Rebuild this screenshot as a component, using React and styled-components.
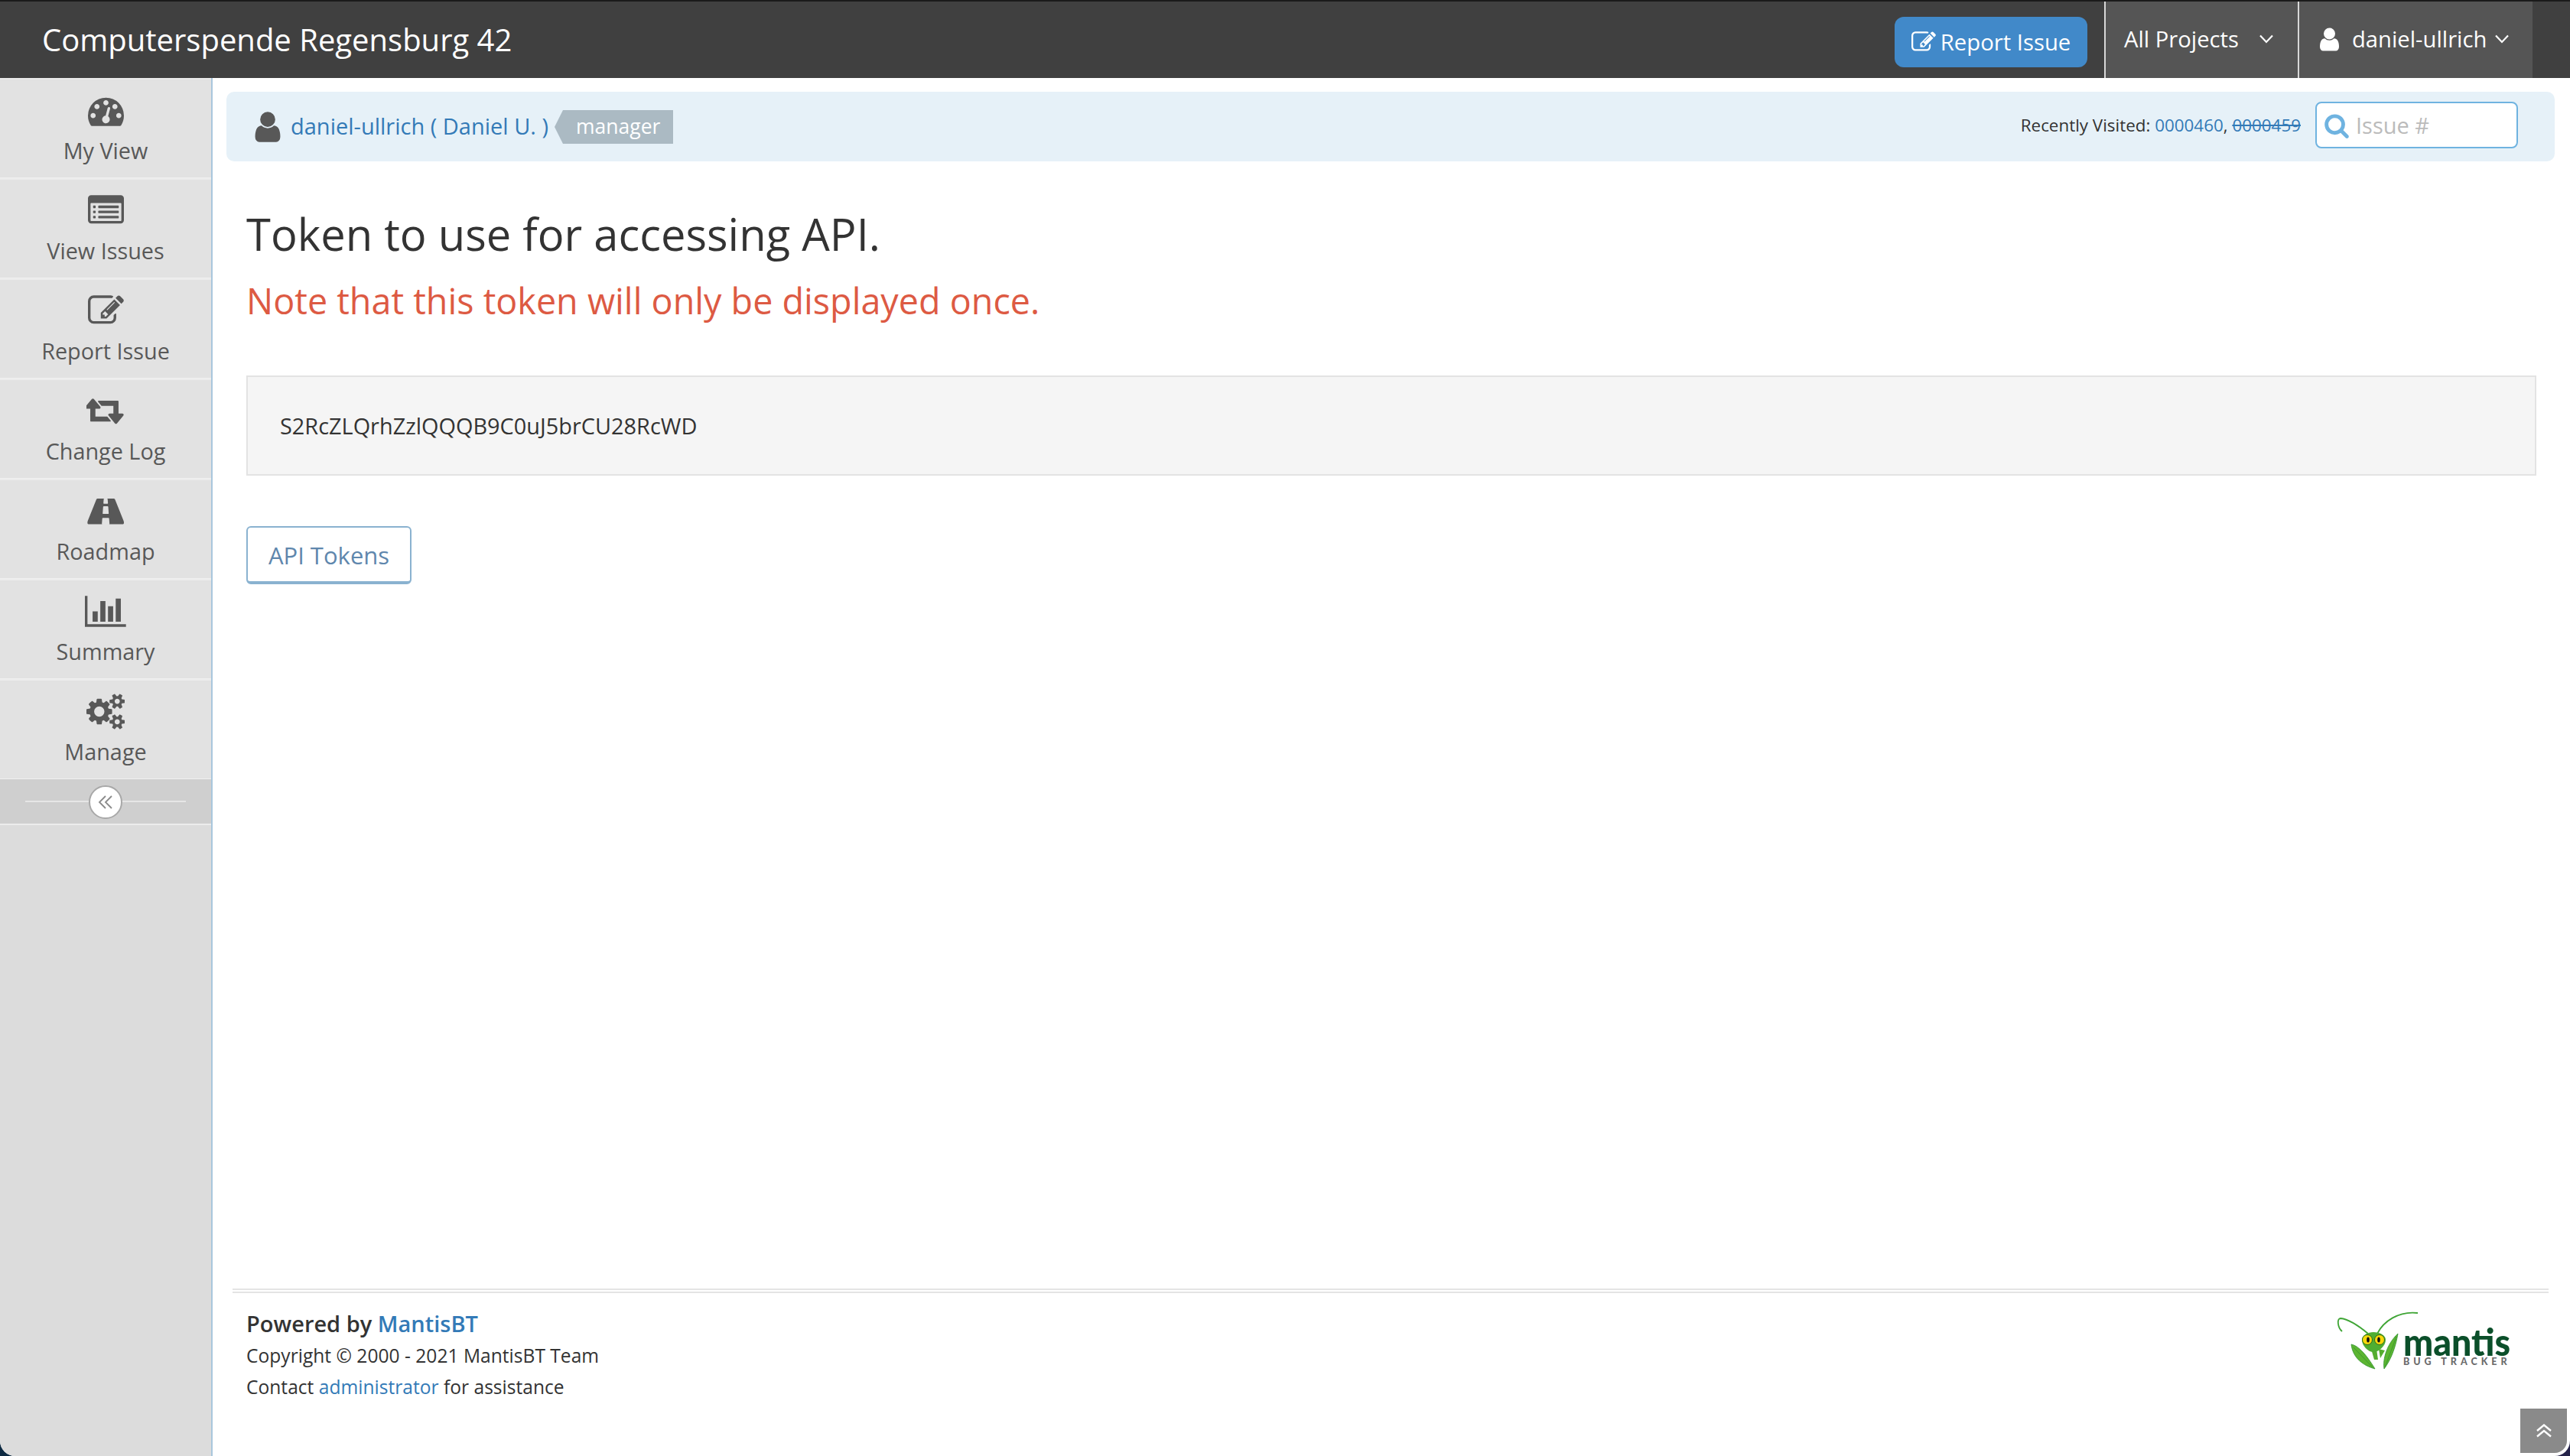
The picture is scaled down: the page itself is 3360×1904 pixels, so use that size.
import styled, { createGlobalStyle } from "styled-components"

const GlobalStyle = createGlobalStyle`
    html, body {
        margin: 0;
        padding: 0;
        background: linear-gradient(to right, #0e2a42, #25234a);
    }
    a {
        color: #337ab7;
        text-decoration: none;
    }
`

const paths = {
    dashboard: [1792, "M384 1152q0-53-37.5-90.5t-90.5-37.5-90.5 37.5-37.5 90.5 37.5 90.5 90.5 37.5 90.5-37.5 37.5-90.5zm192-448q0-53-37.5-90.5t-90.5-37.5-90.5 37.5-37.5 90.5 37.5 90.5 90.5 37.5 90.5-37.5 37.5-90.5zm428 481l101-382q6-26-7.5-48.5t-38.5-29.5-48 6.5-30 39.5l-101 382q-60 5-107 43.5t-63 98.5q-20 77 20 146t117 89 146-20 89-117q16-60-6-117t-72-91zm660-33q0-53-37.5-90.5t-90.5-37.5-90.5 37.5-37.5 90.5 37.5 90.5 90.5 37.5 90.5-37.5 37.5-90.5zm-640-640q0-53-37.5-90.5t-90.5-37.5-90.5 37.5-37.5 90.5 37.5 90.5 90.5 37.5 90.5-37.5 37.5-90.5zm448 192q0-53-37.5-90.5t-90.5-37.5-90.5 37.5-37.5 90.5 37.5 90.5 90.5 37.5 90.5-37.5 37.5-90.5zm320 448q0 261-141 483-19 29-54 29h-1402q-35 0-54-29-141-221-141-483 0-182 71-348t191-286 286-191 348-71 348 71 286 191 191 286 71 348z"],
    list: [1792, "M384 1184v64q0 13-9.5 22.5t-22.5 9.5h-64q-13 0-22.5-9.5t-9.5-22.5v-64q0-13 9.5-22.5t22.5-9.5h64q13 0 22.5 9.5t9.5 22.5zm0-256v64q0 13-9.5 22.5t-22.5 9.5h-64q-13 0-22.5-9.5t-9.5-22.5v-64q0-13 9.5-22.5t22.5-9.5h64q13 0 22.5 9.5t9.5 22.5zm0-256v64q0 13-9.5 22.5t-22.5 9.5h-64q-13 0-22.5-9.5t-9.5-22.5v-64q0-13 9.5-22.5t22.5-9.5h64q13 0 22.5 9.5t9.5 22.5zm1152 512v64q0 13-9.5 22.5t-22.5 9.5h-960q-13 0-22.5-9.5t-9.5-22.5v-64q0-13 9.5-22.5t22.5-9.5h960q13 0 22.5 9.5t9.5 22.5zm0-256v64q0 13-9.5 22.5t-22.5 9.5h-960q-13 0-22.5-9.5t-9.5-22.5v-64q0-13 9.5-22.5t22.5-9.5h960q13 0 22.5 9.5t9.5 22.5zm0-256v64q0 13-9.5 22.5t-22.5 9.5h-960q-13 0-22.5-9.5t-9.5-22.5v-64q0-13 9.5-22.5t22.5-9.5h960q13 0 22.5 9.5t9.5 22.5zm128 704v-832q0-13-9.5-22.5t-22.5-9.5h-1472q-13 0-22.5 9.5t-9.5 22.5v832q0 13 9.5 22.5t22.5 9.5h1472q13 0 22.5-9.5t9.5-22.5zm128-1088v1088q0 66-47 113t-113 47h-1472q-66 0-113-47t-47-113v-1088q0-66 47-113t113-47h1472q66 0 113 47t47 113z"],
    edit: [1792, "M888 1184l116-116-152-152-116 116v56h96v96h56zm440-720q-16-16-33 1l-350 350q-17 17-1 33t33-1l350-350q17-17 1-33zm80 594v190q0 119-84.5 203.5t-203.5 84.5h-832q-119 0-203.5-84.5t-84.5-203.5v-832q0-119 84.5-203.5t203.5-84.5h832q63 0 117 25 15 7 18 23 3 17-9 29l-49 49q-14 14-32 8-23-6-45-6h-832q-66 0-113 47t-47 113v832q0 66 47 113t113 47h832q66 0 113-47t47-113v-126q0-13 9-22l64-64q15-15 35-7t20 29zm-96-738l288 288-672 672h-288v-288zm444 132l-92 92-288-288 92-92q28-28 68-28t68 28l152 152q28 28 28 68t-28 68z"],
    retweet: [1920, "M1216 1392q0 13-9.5 22.5t-22.5 9.5h-960q-8 0-13.5-2t-9-7-5.5-8-3-11.5-1-11.5v-600h-192q-26 0-45-19t-19-45q0-24 15-41l320-384q19-22 49-22t49 22l320 384q15 17 15 41 0 26-19 45t-45 19h-192v384h576q16 0 25 11l160 192q7 10 7 21zm640-304q0 24-15 41l-320 384q-20 23-49 23t-49-23l-320-384q-15-17-15-41 0-26 19-45t45-19h192v-384h-576q-16 0-25-12l-160-192q-7-9-7-20 0-13 9.5-22.5t22.5-9.5h960q8 0 13.5 2t9 7 5.5 8 3 11.5 1 11.5v600h192q26 0 45 19t19 45z"],
    road: [1920, "M1111 1005v-4l-24-320q-1-13-11-22.5t-23-9.5h-186q-13 0-23 9.5t-11 22.5l-24 320v4q-1 12 8 20t21 8h244q12 0 21-8t8-20zm759 467q0 73-46 73h-704q13 0 22-9.5t8-22.5l-20-256q-1-13-11-22.5t-23-9.5h-272q-13 0-23 9.5t-11 22.5l-20 256q-1 13 8 22.5t22 9.5h-704q-46 0-46-73 0-54 26-116l417-1044q8-19 26-33t38-14h339q-13 0-23 9.5t-11 22.5l-15 192q-1 14 8 23t22 9h166q13 0 22-9t8-23l-15-192q-1-13-11-22.5t-23-9.5h339q20 0 38 14t26 33l417 1044q26 62 26 116z"],
    chart: [2048, "M640 896v512h-256v-512h256zm384-512v1024h-256v-1024h256zm1024 1152v128h-2048v-1536h128v1408h1920zm-640-896v768h-256v-768h256zm384-384v1152h-256v-1152h256z"],
    gears: [1920, "M896 896q0-106-75-181t-181-75-181 75-75 181 75 181 181 75 181-75 75-181zm768 512q0-52-38-90t-90-38-90 38-38 90q0 53 37.5 90.5t90.5 37.5 90.5-37.5 37.5-90.5zm0-1024q0-52-38-90t-90-38-90 38-38 90q0 53 37.5 90.5t90.5 37.5 90.5-37.5 37.5-90.5zm-384 421v185q0 10-7 19.5t-16 10.5l-155 24q-11 35-32 76 34 48 90 115 7 11 7 20 0 12-7 19-23 30-82.5 89.5t-78.5 59.5q-11 0-21-7l-115-90q-37 19-77 31-11 108-23 155-7 24-30 24h-186q-11 0-20-7.5t-10-17.5l-23-153q-34-10-75-31l-118 89q-7 7-20 7-11 0-21-8-144-133-144-160 0-9 7-19 10-14 41-53t47-61q-23-44-35-82l-152-24q-10-1-17-9.5t-7-19.5v-185q0-10 7-19.5t16-10.5l155-24q11-35 32-76-34-48-90-115-7-11-7-20 0-12 7-20 22-30 82-89t79-59q11 0 21 7l115 90q34-18 77-32 11-108 23-154 7-24 30-24h186q11 0 20 7.5t10 17.5l23 153q34 10 75 31l118-89q8-7 20-7 11 0 21 8 144 133 144 160 0 8-7 19-12 16-42 54t-45 60q23 48 34 82l152 23q10 2 17 10.5t7 19.5zm640 533v140q0 16-149 31-12 27-30 52 51 113 51 138 0 4-4 7-122 71-124 71-8 0-46-47t-52-68q-20 2-30 2t-30-2q-14 21-52 68t-46 47q-2 0-124-71-4-3-4-7 0-25 51-138-18-25-30-52-149-15-149-31v-140q0-16 149-31 13-29 30-52-51-113-51-138 0-4 4-7 4-2 35-20t59-34 30-16q8 0 46 46.5t52 67.5q20-2 30-2t30 2q51-71 92-112l6-2q4 0 124 70 4 3 4 7 0 25-51 138 17 23 30 52 149 15 149 31zm0-1024v140q0 16-149 31-12 27-30 52 51 113 51 138 0 4-4 7-122 71-124 71-8 0-46-47t-52-68q-20 2-30 2t-30-2q-14 21-52 68t-46 47q-2 0-124-71-4-3-4-7 0-25 51-138-18-25-30-52-149-15-149-31v-140q0-16 149-31 13-29 30-52-51-113-51-138 0-4 4-7 4-2 35-20t59-34 30-16q8 0 46 46.5t52 67.5q20-2 30-2t30 2q51-71 92-112l6-2q4 0 124 70 4 3 4 7 0 25-51 138 17 23 30 52 149 15 149 31z"],
    user: [1792, "M1536 1399q0 109-62.5 187t-150.5 78h-854q-88 0-150.5-78t-62.5-187q0-85 8.5-160.5t31.5-152 58.5-131 94-89 134.5-34.5q131 128 313 128t313-128q76 0 134.5 34.5t94 89 58.5 131 31.5 152 8.5 160.5zm-256-887q0 159-112.5 271.5t-271.5 112.5-271.5-112.5-112.5-271.5 112.5-271.5 271.5-112.5 271.5 112.5 112.5 271.5z"],
    search: [1792, "M1216 832q0-185-131.5-316.5t-316.5-131.5-316.5 131.5-131.5 316.5 131.5 316.5 316.5 131.5 316.5-131.5 131.5-316.5zm512 832q0 52-38 90t-90 38q-54 0-90-38l-343-342q-179 124-399 124-143 0-273.5-55.5t-225-150-150-225-55.5-273.5 55.5-273.5 150-225 225-150 273.5-55.5 273.5 55.5 225 150 150 225 55.5 273.5q0 220-124 399l343 343q37 37 37 90z"],
}

// all of them are drawn on the same em, only the frame width differs
function Icon({ name, size = 48, color = "currentColor" }) {
    const [w, d] = paths[name]
    return (
        <svg width={(w * size) / 1792} height={size} viewBox={`0 0 ${w} 1792`} fill={color} style={{ display: "block", flexShrink: 0 }}>
            <path d={d} />
        </svg>
    )
}

function AngleDown() {
    return (
        <svg width="20" height="12" viewBox="0 0 20 12" fill="none" stroke="#fff" strokeWidth="2.2">
            <polyline points="2,1.5 10,10 18,1.5" />
        </svg>
    )
}

function MantisLogo() {
    return (
        <svg width="260" height="100" viewBox="0 0 260 100">
            <path d="M68 44C76 28 96 14 121 17" fill="none" stroke="#3fa535" strokeWidth="1.8" />
            <path d="M56 44C44 34 30 25 20 24C15 24 16 36 22 41" fill="none" stroke="#3fa535" strokeWidth="1.8" />
            <path d="M34 58C44 60 54 72 65 90C50 86 36 76 34 58Z" fill="#5cb531" stroke="#2f8f2f" strokeWidth="0.8" />
            <path d="M37 62L62 88" stroke="#2f8f2f" strokeWidth="0.7" />
            <path d="M95 44C92 62 86 78 77 90C75 78 80 58 95 44Z" fill="#5cb531" stroke="#2f8f2f" strokeWidth="0.8" />
            <path d="M93 48L78 88" stroke="#2f8f2f" strokeWidth="0.7" />
            <path d="M60 64L64 78L69 78L67 64ZM70 64L72 76L78 66Z" fill="#55ad2f" />
            <path d="M48 52C48 46 56 42 63 42C71 42 79 46 79 52C79 60 70 68 63 68C56 68 48 60 48 52Z" fill="#4fae32" />
            <ellipse cx="55" cy="52" rx="6.5" ry="6.5" fill="#f6d80a" stroke="#2c6b1c" strokeWidth="1" />
            <ellipse cx="71" cy="52" rx="6.5" ry="6.5" fill="#f6d80a" stroke="#2c6b1c" strokeWidth="1" />
            <ellipse cx="56" cy="52" rx="1.8" ry="3.6" fill="#111" />
            <ellipse cx="70" cy="52" rx="1.8" ry="3.6" fill="#111" />
            <text x="102" y="73" fontFamily="Lato, sans-serif" fontWeight="900" fontSize="50" fill="#0b4f2a" textLength="140" lengthAdjust="spacingAndGlyphs">mantis</text>
            <text x="102" y="85" fontFamily="Lato, sans-serif" fontWeight="900" fontSize="12.5" letterSpacing="5" fill="#6b6b6b">BUG TRACKER</text>
        </svg>
    )
}

const menu = [
    { icon: "dashboard", label: "My View" },
    { icon: "list", label: "View Issues" },
    { icon: "edit", label: "Report Issue" },
    { icon: "retweet", label: "Change Log" },
    { icon: "road", label: "Roadmap" },
    { icon: "chart", label: "Summary" },
    { icon: "gears", label: "Manage" },
]

export default function App() {
    return (
        <>
            <GlobalStyle />
            <Page>
                <Navbar>
                    <Brand>Computerspende Regensburg 42</Brand>
                    <ReportButton>
                        <Icon name="edit" size={32} />
                        Report Issue
                    </ReportButton>
                    <NavBlock $width={253} $pad={24}>
                        All Projects
                        <AngleSlot $gap={26}><AngleDown /></AngleSlot>
                    </NavBlock>
                    <NavBlock $width={307} $pad={22}>
                        <Icon name="user" size={35} color="#fff" />
                        <UserName>daniel-ullrich</UserName>
                        <AngleSlot $gap={10}><AngleDown /></AngleSlot>
                    </NavBlock>
                </Navbar>
                <Body>
                    <Sidebar>
                        {menu.map(item => (
                            <MenuItem key={item.label}>
                                <IconSlot><Icon name={item.icon} size={47} /></IconSlot>
                                <MenuLabel>{item.label}</MenuLabel>
                            </MenuItem>
                        ))}
                        <Collapse>
                            <CollapseLine />
                            <CollapseKnob>
                                <svg width="22" height="20" viewBox="0 0 22 20" fill="none" stroke="#8a8a8a" strokeWidth="1.8">
                                    <polyline points="11,2 3,10 11,18" />
                                    <polyline points="19,2 11,10 19,18" />
                                </svg>
                            </CollapseKnob>
                        </Collapse>
                    </Sidebar>
                    <Main>
                        <Breadcrumbs>
                            <UserBox>
                                <Icon name="user" size={46} color="#585858" />
                                <UserLink href="#">daniel-ullrich ( Daniel U. )</UserLink>
                                <RoleTag>manager</RoleTag>
                            </UserBox>
                            <Recent>
                                <span>Recently Visited: <a href="#">0000460</a>, <ClosedLink href="#">0000459</ClosedLink></span>
                                <SearchBox>
                                    <Icon name="search" size={34} color="#6fb3e0" />
                                    <SearchInput placeholder="Issue #" />
                                </SearchBox>
                            </Recent>
                        </Breadcrumbs>
                        <Content>
                            <Title>Token to use for accessing API.</Title>
                            <Note>Note that this token will only be displayed once.</Note>
                            <Well>S2RcZLQrhZzlQQQB9C0uJ5brCU28RcWD</Well>
                            <TokensButton>API Tokens</TokensButton>
                        </Content>
                        <Footer>
                            <FooterRow>
                                <div>
                                    <PoweredBy>Powered by <a href="#">MantisBT</a></PoweredBy>
                                    <FooterLine>Copyright © 2000 - 2021 MantisBT Team</FooterLine>
                                    <FooterLine>Contact <a href="#">administrator</a> for assistance</FooterLine>
                                </div>
                                <LogoBox><MantisLogo /></LogoBox>
                            </FooterRow>
                        </Footer>
                    </Main>
                </Body>
                <ScrollUp>
                    <svg width="20" height="18" viewBox="0 0 20 18" fill="none" stroke="#fff" strokeWidth="2.4">
                        <polyline points="1,9 10,1.5 19,9" />
                        <polyline points="1,16.5 10,9 19,16.5" />
                    </svg>
                </ScrollUp>
            </Page>
        </>
    )
}

const Page = styled.div`
    position: relative;
    width: 3360px;
    height: 1904px;
    display: flex;
    flex-direction: column;
    background: #fff;
    border-radius: 0 0 20px 20px;
    overflow: hidden;
    font-family: "Open Sans", sans-serif;
    font-size: 26px;
    color: #333;
`

const Navbar = styled.header`
    height: 102px;
    box-sizing: border-box;
    border-top: 2px solid #1a1a1a;
    background: #404040;
    display: flex;
    align-items: stretch;
    padding: 0 49px 0 55px;
    color: #fff;
`

const Brand = styled.div`
    flex: 1;
    font-size: 40px;
    line-height: 100px;
`

const ReportButton = styled.div`
    align-self: flex-start;
    margin: 20px 22px 0 0;
    width: 252px;
    height: 66px;
    box-sizing: border-box;
    border-radius: 12px;
    background: #4189c9;
    display: flex;
    align-items: center;
    justify-content: center;
    gap: 6px;
    font-size: 29.3px;
`

const NavBlock = styled.div`
    width: ${p => p.$width}px;
    box-sizing: border-box;
    border-left: 2px solid #d8d8d8;
    background: #555;
    display: flex;
    align-items: center;
    padding-left: ${p => p.$pad}px;
    padding-bottom: 2px;
    font-size: 29.2px;
`

const UserName = styled.span`
    margin-left: 12px;
`

const AngleSlot = styled.span`
    display: flex;
    margin-left: ${p => p.$gap}px;
`

const Body = styled.div`
    flex: 1;
    display: flex;
    min-height: 0;
`

const Sidebar = styled.nav`
    width: 278px;
    box-sizing: border-box;
    background: #dcdcdc;
    border-right: 2px solid #a9c7dd;
    color: #585858;
`

const MenuItem = styled.div`
    height: 131px;
    box-sizing: border-box;
    background: #e2e2e2;
    border-top: 2px solid #ececec;
    border-bottom: 1px solid #f0f0f0;
    display: flex;
    flex-direction: column;
    align-items: center;
    padding-top: 12px;
`

const IconSlot = styled.div`
    height: 56px;
    display: flex;
    align-items: center;
    justify-content: center;
`

const MenuLabel = styled.div`
    font-size: 28.8px;
    line-height: 40px;
    margin-top: 5px;
`

const Collapse = styled.div`
    position: relative;
    height: 60px;
    box-sizing: border-box;
    background: #cfcfcf;
    border-bottom: 2px solid #ececec;
    display: flex;
    align-items: center;
    justify-content: center;
`

const CollapseLine = styled.div`
    width: 210px;
    height: 2px;
    background: #e6e6e6;
`

const CollapseKnob = styled.div`
    position: absolute;
    left: 116px;
    top: 8px;
    width: 44px;
    height: 44px;
    box-sizing: border-box;
    border-radius: 50%;
    border: 2px solid #a8a8a8;
    background: #fff;
    display: flex;
    align-items: center;
    justify-content: center;
`

const Main = styled.main`
    flex: 1;
    min-width: 0;
    display: flex;
    flex-direction: column;
`

const Breadcrumbs = styled.div`
    margin: 18px 20px 0 18px;
    height: 91px;
    box-sizing: border-box;
    border-radius: 10px;
    background: #e6f1f8;
    display: flex;
    align-items: center;
    justify-content: space-between;
    padding: 0 48px 0 31px;
`

const UserBox = styled.div`
    display: flex;
    align-items: center;
`

const UserLink = styled.a`
    margin: 0 0 2px 7px;
    font-size: 29px;
`

const RoleTag = styled.span`
    position: relative;
    margin-left: 19px;
    height: 44px;
    padding: 0 17px;
    background: #abbac3;
    color: #fff;
    font-size: 26.5px;
    line-height: 42px;
    &::before {
        content: "";
        position: absolute;
        left: -11px;
        top: 0;
        border-style: solid;
        border-width: 22px 11px 22px 0;
        border-color: transparent #abbac3 transparent transparent;
    }
`

const Recent = styled.div`
    display: flex;
    align-items: center;
    gap: 19px;
    padding-bottom: 4px;
    font-size: 22.4px;
`

const ClosedLink = styled.a`
    text-decoration: line-through;
`

const SearchBox = styled.div`
    width: 265px;
    height: 61px;
    box-sizing: border-box;
    border: 2px solid #6fb3e0;
    border-radius: 8px;
    background: #fff;
    display: flex;
    align-items: center;
    padding-left: 9px;
`

const SearchInput = styled.input`
    width: 170px;
    margin-left: 8px;
    border: 0;
    outline: 0;
    padding: 0;
    background: transparent;
    font-family: inherit;
    font-size: 29px;
    &::placeholder {
        color: #bbb;
        opacity: 1;
    }
`

const Content = styled.section`
    padding: 0 44px;
`

const Title = styled.h1`
    margin: 53px 0 0;
    font-size: 57.9px;
    font-weight: 400;
    line-height: 84px;
`

const Note = styled.p`
    margin: 3px 0 0;
    font-size: 46.7px;
    line-height: 84px;
    color: #dd5a43;
`

const Well = styled.div`
    margin-top: 56px;
    height: 131px;
    box-sizing: border-box;
    background: #f5f5f5;
    border: 2px solid #e3e3e3;
    padding-left: 42px;
    display: flex;
    align-items: center;
    font-size: 28.9px;
`

const TokensButton = styled.div`
    margin-top: 66px;
    width: 216px;
    height: 76px;
    box-sizing: border-box;
    background: #fff;
    border: 2px solid #8ab2d0;
    border-bottom-width: 4px;
    border-radius: 6px;
    color: #5f87ad;
    display: flex;
    align-items: center;
    justify-content: center;
    padding-top: 2px;
    font-size: 31px;
`

const Footer = styled.footer`
    margin: auto 28px 0 26px;
    height: 219px;
    box-sizing: border-box;
    border-top: 6px double #e4e4e4;
`

const FooterRow = styled.div`
    display: flex;
    justify-content: space-between;
    padding: 19px 18px 0 18px;
`

const PoweredBy = styled.div`
    font-size: 29px;
    font-weight: 600;
    line-height: 42px;
`

const FooterLine = styled.div`
    font-size: 24.6px;
    line-height: 41px;
`

const LogoBox = styled.div`
    margin-top: -10px;
    margin-right: 14px;
    height: 100px;
`

const ScrollUp = styled.div`
    position: absolute;
    right: 4px;
    bottom: 4px;
    width: 61px;
    height: 58px;
    background: #8a8a8a;
    border-radius: 0 0 16px 0;
    display: flex;
    align-items: center;
    justify-content: center;
`
